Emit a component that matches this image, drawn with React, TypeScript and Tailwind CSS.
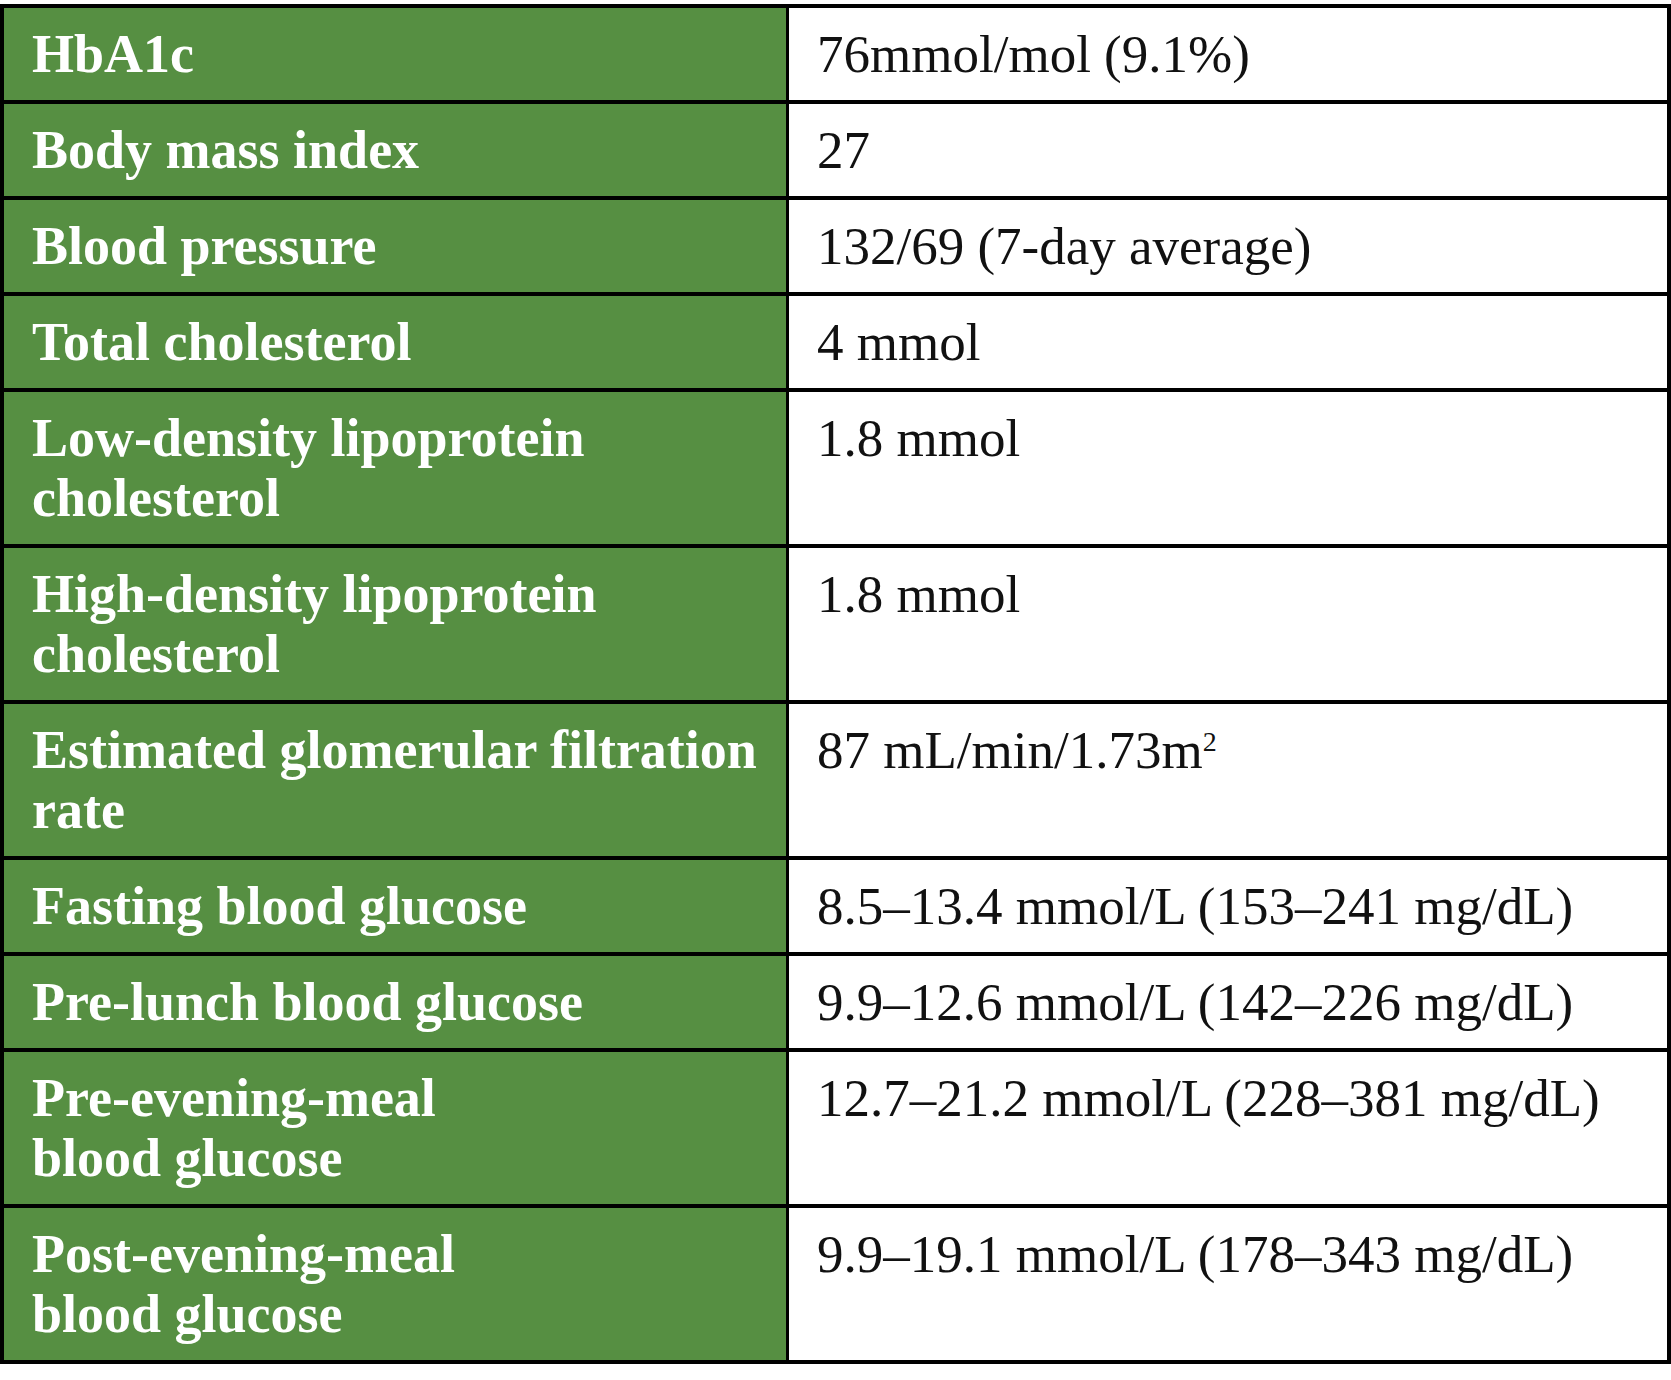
import React from 'react';

interface Row {
  label: React.ReactNode;
  value: React.ReactNode;
}

const rows: Row[] = [
  { label: 'HbA1c', value: '76mmol/mol (9.1%)' },
  { label: 'Body mass index', value: '27' },
  { label: 'Blood pressure', value: '132/69 (7-day average)' },
  { label: 'Total cholesterol', value: '4 mmol' },
  { label: <>Low-density lipoprotein<br />cholesterol</>, value: '1.8 mmol' },
  { label: <>High-density lipoprotein<br />cholesterol</>, value: '1.8 mmol' },
  {
    label: <>Estimated glomerular filtration<br />rate</>,
    value: <>87 mL/min/1.73m<sup className="text-[28px] -top-[17px]">2</sup></>,
  },
  { label: 'Fasting blood glucose', value: '8.5–13.4 mmol/L (153–241 mg/dL)' },
  { label: 'Pre-lunch blood glucose', value: '9.9–12.6 mmol/L (142–226 mg/dL)' },
  { label: <>Pre-evening-meal<br />blood glucose</>, value: '12.7–21.2 mmol/L (228–381 mg/dL)' },
  { label: <>Post-evening-meal<br />blood glucose</>, value: '9.9–19.1 mmol/L (178–343 mg/dL)' },
];

export default function App() {
  return (
    <div className="w-[1671px] min-h-[1380px] bg-white pt-[4px] font-['Liberation_Serif',serif]">
      <div className="border-[4px] border-black">
        {rows.map((row, i) => (
          <div
            key={i}
            className={`grid grid-cols-[785px_1fr] ${i > 0 ? 'border-t-[4px] border-black' : ''}`}
          >
            <div className="bg-[#568f42] border-r-[3px] border-black px-[28px] py-[16px] text-[54px] leading-[60px] font-bold text-white whitespace-nowrap">
              {row.label}
            </div>
            <div className="bg-white px-[28px] py-[16px] text-[53px] leading-[60px] text-[#111]">
              {row.value}
            </div>
          </div>
        ))}
      </div>
    </div>
  );
}
